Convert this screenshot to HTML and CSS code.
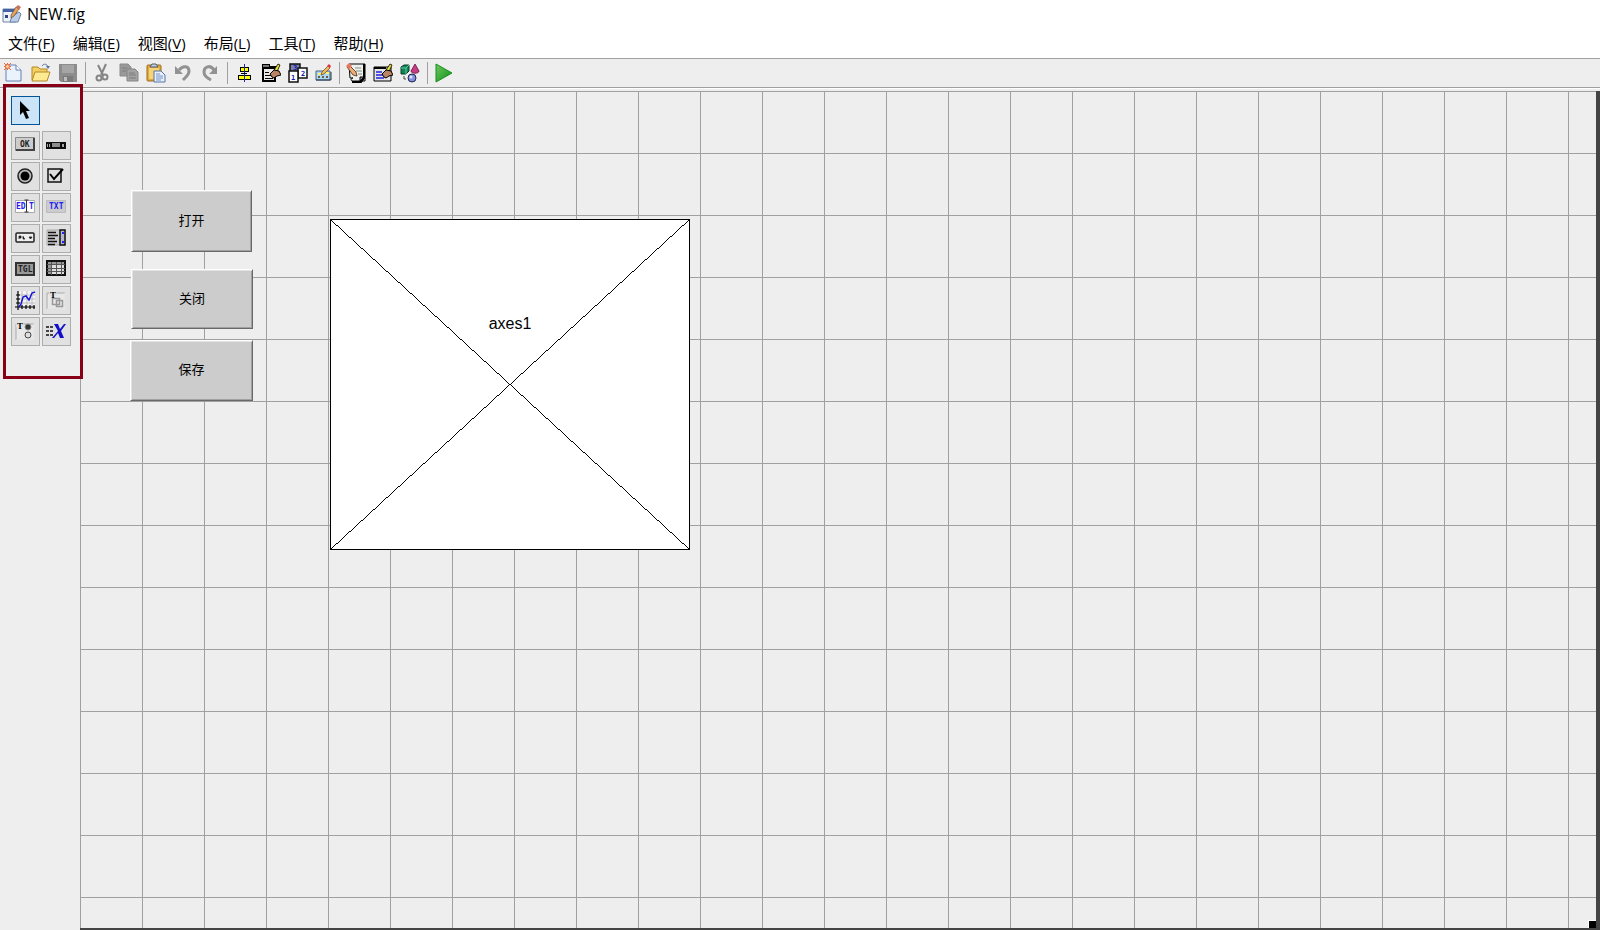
FILE: index.html
```html
<!DOCTYPE html>
<html lang="zh-CN">

<head>
    <meta charset="UTF-8">
    <meta name="viewport" content="width=device-width, initial-scale=1.0">
    <title>NEW.fig</title>
    <link rel="stylesheet" href="styles.css">
</head>

<body>
    <header class="titlebar">
        <svg class="app-icon" viewBox="0 0 20 20">
            <path d="M1 5h13v13H1z" fill="#eef3fa" stroke="#6f83a8" />
            <path d="M1 5h13v3H1z" fill="#4564a8" />
            <path d="M3 11h3v3H3z" fill="#2b4585" />
            <path d="M8 18l2-6 7-4 2 2-3 8z" fill="#b9cde8" stroke="#6f83a8" />
            <path d="M9 11l5-8 3 2-5 7-3 2z" fill="#e8a35c" stroke="#5c4634" stroke-width=".7" />
            <path d="M14 3l2-2 3 2-2 3z" fill="#c9735a" />
        </svg>
        <h1>NEW.fig</h1>
    </header>

    <nav class="menubar">
        <a href="#">文件(<u>F</u>)</a>
        <a href="#">编辑(<u>E</u>)</a>
        <a href="#">视图(<u>V</u>)</a>
        <a href="#">布局(<u>L</u>)</a>
        <a href="#">工具(<u>T</u>)</a>
        <a href="#">帮助(<u>H</u>)</a>
    </nav>

    <div class="toolbar">
        <button class="tool" aria-label="新建">
            <svg viewBox="0 0 20 20">
                <path d="M2 2h10l5 5v11H2z" fill="#eaf2fc" stroke="#6480b4" />
                <path d="M12 2v5h5" fill="#fff" stroke="#6480b4" />
                <path d="M0 0l7 7M7 0L0 7M3.500 0v7M0 3.500h7" stroke="#e8683c" />
                <circle cx="3.500" cy="3.500" r="2" fill="#ffd49a" stroke="#e8683c" />
            </svg>
        </button>
        <button class="tool" aria-label="打开文件">
            <svg viewBox="0 0 20 20">
                <path d="M1 17V4h6l2 2h7v11z" fill="#f4cf62" stroke="#b38a25" />
                <path d="M1 18l3-9h15l-3 9z" fill="#ffea91" stroke="#b38a25" />
                <path d="M11 3c2-3 5-2 6 1" fill="none" stroke="#55739c" />
                <path d="M15 3h4l-2 3z" fill="#55739c" />
            </svg>
        </button>
        <button class="tool" aria-label="保存文件">
            <svg viewBox="0 0 20 20">
                <path d="M1 1h18v18H3l-2-2z" fill="#8c8c8c" />
                <path d="M4 2h12v8H4z" fill="#a5a5a5" />
                <path d="M5 13h10v6H5z" fill="#7a7a7a" />
                <path d="M6 14h3v4H6z" fill="#bdbdbd" />
            </svg>
        </button>
        <span class="divider"></span>
        <button class="tool" aria-label="剪切">
            <svg viewBox="0 0 20 20">
                <path d="M6 2l5 10M14 1L9 12" stroke="#858585" stroke-width="2" />
                <circle cx="7" cy="15" r="2.500" fill="none" stroke="#858585" stroke-width="2" />
                <circle cx="13" cy="14" r="2.500" fill="none" stroke="#858585" stroke-width="2" />
            </svg>
        </button>
        <button class="tool" aria-label="复制">
            <svg viewBox="0 0 20 20">
                <path d="M1 1h8l3 3v9H1z" fill="#999" stroke="#8a8a8a" />
                <path d="M8 6h8l3 3v9H8z" fill="#a3a3a3" stroke="#858585" />
                <path d="M3 5h5M3 8h4M10 10h6M10 12h7M10 15h7" stroke="#7c7c7c" />
            </svg>
        </button>
        <button class="tool" aria-label="粘贴">
            <svg viewBox="0 0 20 20">
                <rect x="1" y="2" width="14" height="16" rx="1" fill="#e2aa3d" stroke="#9b6b18" />
                <path d="M3 5h10v11H3z" fill="#f5d477" />
                <path d="M4 4l2-3h4l2 3z" fill="#c5cede" stroke="#4c5a77" />
                <path d="M8 8h7l4 4v7H8z" fill="#e7f0fc" stroke="#5474aa" />
                <path d="M10 11h4M10 13h7M10 15h7M10 17h5" stroke="#7895c6" />
            </svg>
        </button>
        <button class="tool" aria-label="撤销">
            <svg viewBox="0 0 20 20">
                <path d="M6 7c4-5 10-4 10 1 0 4-3 6-6 9" fill="none" stroke="#929292" stroke-width="3" />
                <path d="M2 3v8h8z" fill="#929292" />
            </svg>
        </button>
        <button class="tool" aria-label="重做">
            <svg viewBox="0 0 20 20">
                <path d="M14 7C10 1 4 4 4 9c0 4 3 6 7 8" fill="none" stroke="#929292" stroke-width="3" />
                <path d="M17 3v8h-8z" fill="#929292" />
            </svg>
        </button>
        <span class="divider"></span>
        <button class="tool" aria-label="对齐对象">
            <svg viewBox="0 0 20 20" shape-rendering="crispEdges">
                <path d="M6 4h8v4H6zM4 12h12v4H4z" fill="#ff0" stroke="#000" />
                <path d="M10 1v18" stroke="#2525b8" />
                <path d="M7 10h6" stroke="#000" />
            </svg>
        </button>
        <button class="tool" aria-label="菜单编辑器">
            <svg viewBox="0 0 20 20">
                <g shape-rendering="crispEdges">
                    <path d="M1 1h7v4H1z" fill="#777" stroke="#000" />
                    <path d="M2 5h12v13H2z" fill="#e9e9e9" stroke="#000" stroke-width="2" />
                    <path d="M8 4h9" stroke="#000" stroke-width="2" />
                    <path d="M4 9h4M4 12h7M4 15h8" stroke="#000" />
                </g>
                <path d="M11 10l6-9 2 1-4 9z" fill="#e5df38" stroke="#000" stroke-width=".8" />
                <path d="M9 11l4-4 5 1 2 4-4 1-3 2-2-1z" fill="#b98463" stroke="#000" />
            </svg>
        </button>
        <button class="tool" aria-label="Tab 键顺序编辑器">
            <svg viewBox="0 0 20 20" class="numbers">
                <path d="M2 1h10v10H2z" fill="#7782a5" stroke="#111" stroke-width="1.500" />
                <path d="M10 5h9v10h-9z" fill="#fff" stroke="#111" stroke-width="1.500" />
                <path d="M1 8h9v11H1z" fill="#fff" stroke="#111" stroke-width="1.500" />
                <text x="5" y="7">3</text>
                <text x="13" y="13">2</text>
                <text x="3" y="17">1</text>
            </svg>
        </button>
        <button class="tool tool-narrow" aria-label="工具栏编辑器">
            <svg viewBox="0 0 20 20">
                <path d="M3 8h14v9H3z" fill="#acd8f4" stroke="#48657d" />
                <path d="M3 17h15V9" fill="none" stroke="#263746" />
                <path d="M5 13h2v2H5zM9 13h2v2H9zM13 13h2v2h-2z" fill="#6b6045" />
                <path d="M5 11h3M13 10h3" stroke="#fff36b" stroke-width="2" />
                <path d="M8 12l1-3 6-6 2 2-6 6z" fill="#f2b65c" stroke="#684524" stroke-width=".7" />
                <path d="M14 3l2-2 2 2-1 2z" fill="#dc3640" />
            </svg>
        </button>
        <span class="divider"></span>
        <button class="tool" aria-label="编辑器">
            <svg viewBox="0 0 20 20">
                <path d="M3 1h16v17H7c-3 0-2-3 0-3H4z" fill="#edf0ec" stroke="#000" />
                <path d="M18 1v14l-3 4H6" fill="none" stroke="#000" stroke-width="2" />
                <path d="M14 18v-4h4z" fill="#889" stroke="#000" />
                <path d="M9 5h6M10 8h6M12 11h4" stroke="#849184" />
                <path d="M1 4l2-2 7 7 1 4-4-1z" fill="#edac78" stroke="#49281a" stroke-width=".8" />
                <path d="M0 3l3-3 3 3-3 3z" fill="#e6785e" />
            </svg>
        </button>
        <button class="tool" aria-label="属性检查器">
            <svg viewBox="0 0 20 20">
                <path d="M1 4h17v14H1z" fill="#e5e5e5" stroke="#000" />
                <path d="M1 5h12" stroke="#000" stroke-width="2" />
                <path d="M3 9h6M3 12h8M3 15h8" stroke="#2020e0" stroke-width="1.500" />
                <path d="M11 10l6-9 2 1-4 9z" fill="#e5df38" stroke="#000" stroke-width=".8" />
                <path d="M9 11l4-4 5 1 2 4-4 1-3 2-2-1z" fill="#b98463" stroke="#000" />
            </svg>
        </button>
        <button class="tool" aria-label="对象浏览器">
            <svg viewBox="0 0 20 20">
                <path d="M1 4l3-2h5v6l-3 3H1z" fill="#148256" stroke="#073a28" />
                <path d="M1 5h5v6M6 5l3-3" fill="none" stroke="#55cca0" />
                <path d="M15 1l4 7c0 3-8 3-8 0z" fill="#c63b83" stroke="#62133f" stroke-width=".8" />
                <circle cx="12" cy="15" r="4" fill="#8290dd" stroke="#20264f" />
                <circle cx="11" cy="14" r="1.500" fill="#e2e7ff" />
                <path d="M4 13v3h2" fill="none" stroke="#444" />
            </svg>
        </button>
        <span class="divider"></span>
        <button class="tool" aria-label="运行">
            <svg viewBox="0 0 20 20">
                <defs>
                    <linearGradient id="run-fill" x2="1" y2="1">
                        <stop stop-color="#72c565" />
                        <stop offset="1" stop-color="#089112" />
                    </linearGradient>
                </defs>
                <path d="M2 1l16 9-16 9z" fill="url(#run-fill)" stroke="#15911b" />
            </svg>
        </button>
    </div>

    <main class="workspace">
        <aside class="palette">
            <button class="control selected" aria-label="选择">
                <svg viewBox="0 0 21 21">
                    <path d="M5 1v14l3-3 3 7 3-1-3-7h4z" fill="#000" />
                </svg>
            </button>
            <div class="controls">
                <button class="control" aria-label="普通按钮">
                    <svg viewBox="0 0 21 21" class="label-icon">
                        <path d="M.500 2.500h19v13h-19z" fill="#ccc" stroke="#888" />
                        <path d="M1 15h18V3" fill="none" stroke="#444" stroke-width="2" />
                        <text x="5" y="12">OK</text>
                    </svg>
                </button>
                <button class="control" aria-label="滑块">
                    <svg viewBox="0 0 21 21" shape-rendering="crispEdges">
                        <path d="M0 7h20v7H0z" fill="#111" />
                        <path d="M6 8h8v4H6z" fill="#8c8c8c" />
                        <path d="M1 9h3v3H1zM16 9h3v3h-3z" fill="#aaa" />
                        <path d="M2 9v3M5 8v5M15 8v5M18 9v3" stroke="#000" />
                    </svg>
                </button>
                <button class="control" aria-label="单选按钮">
                    <svg viewBox="0 0 21 21">
                        <circle cx="10" cy="10" r="7" fill="#bbb" stroke="#222" stroke-width="1.500" />
                        <circle cx="10" cy="10" r="4.500" fill="#000" />
                    </svg>
                </button>
                <button class="control" aria-label="复选框">
                    <svg viewBox="0 0 21 21">
                        <path d="M2 3h13v13H2z" fill="#ddd" stroke="#111" stroke-width="1.500" />
                        <path d="M4 8l4 5 9-10" fill="none" stroke="#000" stroke-width="2" />
                    </svg>
                </button>
                <button class="control" aria-label="可编辑文本">
                    <svg viewBox="0 0 21 21" class="label-icon blue">
                        <path d="M.500 3.500h19v12H.500z" fill="#fff" stroke="#aaa" />
                        <text x="1" y="12">ED</text>
                        <text x="14" y="12">T</text>
                        <path d="M9.500 3h4M11.500 3v12M9.500 15h4" stroke="#333" />
                    </svg>
                </button>
                <button class="control" aria-label="静态文本">
                    <svg viewBox="0 0 21 21" class="label-icon blue">
                        <path d="M.500 3.500h19v12H.500z" fill="#ccc" stroke="#bbb" />
                        <text x="3" y="12">TXT</text>
                    </svg>
                </button>
                <button class="control" aria-label="弹出式菜单">
                    <svg viewBox="0 0 21 21">
                        <rect x="1" y="5" width="18" height="9" rx="1" fill="#eee" stroke="#222" stroke-width="1.500" />
                        <path d="M4 11V8h2v2H4M8 8v3h2M14 9h3l-1.500 2z" fill="#222" stroke="#222" stroke-width=".8" />
                    </svg>
                </button>
                <button class="control" aria-label="列表框">
                    <svg viewBox="0 0 21 21">
                        <path d="M1 2h18v15H1z" fill="#ccc" stroke="#aaa" />
                        <path d="M2 4.500h8M2 7.500h10M2 10.500h7M2 13.500h9M2 16.500h7" stroke="#111" stroke-width="1.500" />
                        <path d="M14 2h5v15h-5z" fill="#b7b7ca" stroke="#111" stroke-width="1.500" />
                        <path d="M16 5h2M16 14h2" stroke="#22f" stroke-width="2" />
                    </svg>
                </button>
                <button class="control" aria-label="切换按钮">
                    <svg viewBox="0 0 21 21" class="label-icon">
                        <path d="M1 4h18v12H1z" fill="#999" stroke="#333" stroke-width="2" />
                        <text x="3" y="13">TGL</text>
                    </svg>
                </button>
                <button class="control" aria-label="表">
                    <svg viewBox="0 0 21 21" shape-rendering="crispEdges">
                        <path d="M1 2h18v14H1z" fill="#ddd" stroke="#111" stroke-width="2" />
                        <path d="M2 3h16v2H2zM2 3h3v12H2z" fill="#999" />
                        <path d="M5 3v13M10 3v13M15 3v13M1 5h18M1 9h18M1 12h18" stroke="#555" />
                    </svg>
                </button>
                <button class="control" aria-label="坐标区">
                    <svg viewBox="0 0 21 21">
                        <path d="M3 1h17v16H3z" fill="#f4f4f4" />
                        <path d="M7 1v16M12 1v16M17 1v16M3 5h17M3 9h17M3 13h17" stroke="#bbb" />
                        <path d="M3 1v19M0 17h20M1 5h4M1 9h4M1 13h4M7 15v4M11 15v4M15 15v4M19 15v4" stroke="#000" stroke-width="1.200" />
                        <path d="M4 17l2-3 2-7 3-1 3 4 3-7 3-1" fill="none" stroke="#1515dd" stroke-width="1.500" />
                    </svg>
                </button>
                <button class="control" aria-label="面板">
                    <svg viewBox="0 0 21 21" class="group-icon">
                        <path d="M1 3h18v16H1z" fill="#e8e8e8" stroke="#aaa" />
                        <path d="M1 19h18V3" fill="none" stroke="#fff" />
                        <path d="M6.500 8.500h7v6h-7zM10.500 10.500h6v6h-6z" fill="none" stroke="#999" stroke-width="1.500" />
                        <path d="M3 0h8v6H3z" fill="#e3e3e3" />
                        <text x="4" y="8">T</text>
                    </svg>
                </button>
                <button class="control" aria-label="按钮组">
                    <svg viewBox="0 0 21 21" class="group-icon">
                        <path d="M1 3h18v16H1z" fill="#e8e8e8" stroke="#aaa" />
                        <path d="M1 19h18V3" fill="none" stroke="#fff" />
                        <circle cx="13" cy="6" r="3" fill="#333" stroke="#888" />
                        <circle cx="13" cy="14" r="3" fill="#ddd" stroke="#444" />
                        <path d="M1 0h8v6H1z" fill="#e3e3e3" />
                        <text x="2" y="8">T</text>
                    </svg>
                </button>
                <button class="control" aria-label="ActiveX 控件">
                    <svg viewBox="0 0 21 21">
                        <path d="M0 6h7M0 10h8M0 14h7" stroke="#111" stroke-width="1.500" stroke-dasharray="3 1" />
                        <path d="M8 3h4l2 5 4-5h2l-5 7 3 7h-4l-2-5-4 5H6l6-7z" fill="#1010c8" />
                    </svg>
                </button>
            </div>
        </aside>

        <section class="canvas">
            <button class="push-button open">打开</button>
            <button class="push-button close">关闭</button>
            <button class="push-button save">保存</button>
            <div class="axes">
                <svg viewBox="0 0 360 331" preserveAspectRatio="none" shape-rendering="crispEdges">
                    <path d="M0 0L360 331M360 0L0 331" stroke="#000" />
                </svg>
                <span>axes1</span>
            </div>
            <span class="resize-handle"></span>
        </section>

        <div class="highlight"></div>
    </main>
</body>

</html>
```

FILE: styles.css
```css
:root {
    --panel: #eee;
    --line: #a0a0a0;
    --dark: #444;
    --mark: #880015;
    --grid: 62px;
}

* {
    box-sizing: border-box;
    margin: 0;
    padding: 0;
}

body {
    display: flex;
    flex-direction: column;
    min-height: 100vh;
    background: #fff;
    color: #000;
    font-family: "Open Sans", "Noto Sans CJK SC", sans-serif;
}

button {
    font: inherit;
    color: inherit;
}

/* 标题栏和菜单 */
.titlebar {
    display: flex;
    align-items: center;
    gap: 5px;
    height: 28px;
    padding-left: 2px;
}

.titlebar h1 {
    font-size: 16px;
    font-weight: 400;
}

.app-icon {
    width: 20px;
    height: 20px;
}

.menubar {
    display: flex;
    align-items: center;
    gap: 18px;
    height: 30px;
    padding-left: 8px;
    font-size: 15px;
    line-height: 20px;
}

.menubar a {
    color: inherit;
    text-decoration: none;
    white-space: nowrap;
}

.menubar u {
    text-underline-offset: 2px;
}

/* 工具栏 */
.toolbar {
    display: flex;
    align-items: center;
    height: 30px;
    background: var(--panel);
    border-top: 1px solid var(--line);
    border-bottom: 1px solid var(--line);
}

.tool {
    display: flex;
    justify-content: center;
    width: 27px;
    border: none;
    background: none;
}

.tool-narrow {
    width: 24px;
}

.tool svg {
    flex: none;
    width: 20px;
    height: 20px;
}

.divider {
    width: 7px;
    height: 22px;
    background: linear-gradient(var(--line), var(--line)) 4px 0 / 1px 100% no-repeat;
}

.numbers text {
    font: bold 7px "DejaVu Sans Mono", monospace;
    fill: #1a1ab0;
}

/* 组件面板 */
.workspace {
    display: flex;
    flex: 1;
    position: relative;
    background: var(--panel);
    border-top: 1px solid #fff;
}

.palette {
    flex: none;
    width: 80px;
    padding: 7px 9px 0 11px;
}

.controls {
    display: grid;
    grid-template-columns: 29px 29px;
    gap: 2px;
    margin-top: 6px;
}

.control {
    display: block;
    width: 29px;
    height: 29px;
    padding: 3px;
    border: 1px solid #adadad;
    background: #e1e1e1;
}

.control.selected {
    border-color: #005499;
    background: #cce4f7;
}

.control svg {
    display: block;
    width: 21px;
    height: 21px;
    overflow: visible;
}

.label-icon text {
    font: bold 8px "DejaVu Sans Mono", monospace;
    fill: #222;
}

.label-icon.blue text {
    fill: #2222f0;
}

.group-icon text {
    font: bold 9px "Liberation Serif", serif;
    fill: #000;
}

.highlight {
    position: absolute;
    top: -5px;
    left: 3px;
    width: 80px;
    height: 295px;
    border: 3px solid var(--mark);
    pointer-events: none;
}

/* 设计画布 */
.canvas {
    flex: 1;
    position: relative;
    margin-top: 2px;
    border-right: 4px solid var(--dark);
    border-bottom: 2px solid var(--dark);
    background-image:
        linear-gradient(var(--line) 1px, transparent 1px),
        linear-gradient(90deg, var(--line) 1px, transparent 1px);
    background-size: var(--grid) var(--grid);
}

.push-button {
    position: absolute;
    padding-bottom: 4px;
    border: 1px solid;
    border-color: #fff #696969 #696969 #fff;
    background: #ccc;
    box-shadow: inset 1px 1px #e3e3e3, inset -1px -1px #a0a0a0;
    font-family: "Liberation Sans", "Noto Sans CJK SC", sans-serif;
    font-size: 13px;
}

.open {
    left: 51px;
    top: 99px;
    width: 121px;
    height: 62px;
}

.close {
    left: 51px;
    top: 178px;
    width: 122px;
    height: 60px;
}

.save {
    left: 50px;
    top: 249px;
    width: 123px;
    height: 61px;
}

.axes {
    position: absolute;
    left: 250px;
    top: 128px;
    width: 360px;
    height: 331px;
    padding-top: 94px;
    border: 1px solid #000;
    background: #fff;
    font: 16px/20px "Liberation Sans", sans-serif;
    text-align: center;
}

.axes svg {
    position: absolute;
    inset: 0;
    width: 100%;
    height: 100%;
}

.resize-handle {
    position: absolute;
    right: 0;
    bottom: 0;
    width: 8px;
    height: 8px;
    border-top: 1px solid #fff;
    border-left: 1px solid #fff;
    background: #000;
}
```
